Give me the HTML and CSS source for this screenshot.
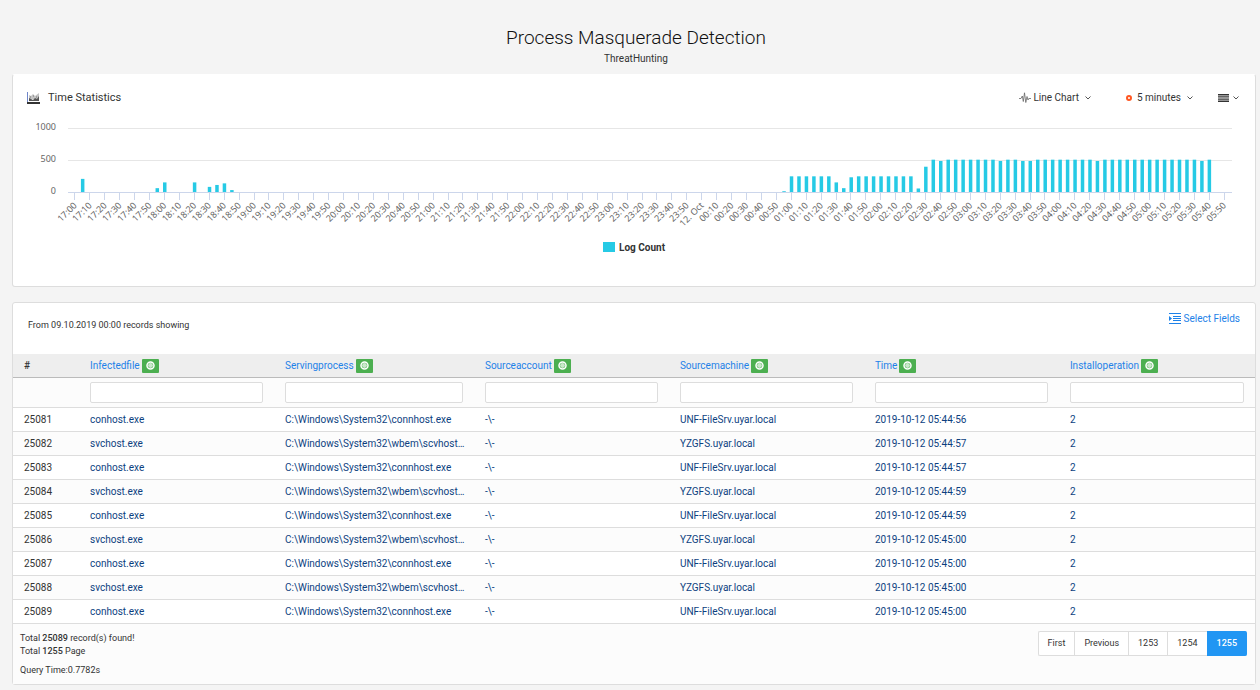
FILE: index.html
```html
<!DOCTYPE html>
<html lang="en">
<head>
<meta charset="utf-8">
<meta name="viewport" content="width=device-width, initial-scale=1">
<title>Process Masquerade Detection</title>
<link rel="stylesheet" href="styles.css">
</head>
<body>
<header class="page-head">
  <h1 class="page-title">Process Masquerade Detection</h1>
  <p class="page-sub">ThreatHunting</p>
</header>
<main class="page-main">
  <section class="card chart-card">
    <div class="chart-head">
      <h2 class="chart-title">
        <svg class="icon-chart" width="13" height="12" viewBox="0 0 13 12" aria-hidden="true">
          <path d="M2 7V3l2 1 2-2 2 2 4-3v6z" fill="#c4c4c4"/>
          <path d="M2 9V6l2 1 2 1 2-2 2 1 2-3v5z" fill="#555"/>
          <path d="M3 5h1M6 4h1M9 5h1" stroke="#777"/>
          <path d="M.5 0v11" stroke="#6f86c9"/>
          <path d="M0 11h13" stroke="#333" stroke-width="2"/>
        </svg>
        Time Statistics
      </h2>
      <div class="chart-tools">
        <button class="tool" type="button">
          <svg width="12" height="12" viewBox="0 0 12 12" fill="none" stroke="#666" stroke-width=".8" aria-hidden="true"><path d="M0 6.500h2L3.300 4l1 5.500L5.500 .8l1.300 9.700L8 4.500l1 3.500.8-1.500H12"/></svg>
          <span>Line Chart</span>
          <svg class="caret" width="6" height="4" viewBox="0 0 6 4" fill="none" stroke="#555" aria-hidden="true"><path d="M.5.5L3 3 5.500.5"/></svg>
        </button>
        <button class="tool tool-interval" type="button">
          <svg width="6" height="6" viewBox="0 0 6 6" fill="none" aria-hidden="true"><circle cx="3" cy="3" r="2" stroke="#ff5722" stroke-width="2"/></svg>
          <span>5 minutes</span>
          <svg class="caret" width="6" height="4" viewBox="0 0 6 4" fill="none" stroke="#555" aria-hidden="true"><path d="M.5.5L3 3 5.500.5"/></svg>
        </button>
        <button class="tool tool-menu" type="button" aria-label="Chart menu">
          <svg width="11" height="8" viewBox="0 0 11 8" aria-hidden="true"><path d="M0 .7h11M0 2.900h11M0 5.100h11M0 7.300h11" stroke="#333" stroke-width="1.400"/></svg>
          <svg class="caret" width="6" height="4" viewBox="0 0 6 4" fill="none" stroke="#555" aria-hidden="true"><path d="M.5.5L3 3 5.500.5"/></svg>
        </button>
      </div>
    </div>
    <svg class="chart" id="chart" role="img" aria-label="Log count over time"></svg>
    <div class="legend"><span class="legend-swatch"></span>Log Count</div>
  </section>

  <section class="card">
    <div class="list-head">
      <p class="list-note">From 09.10.2019 00:00 records showing</p>
      <a class="select-fields" href="#fields">
        <svg width="12" height="11" viewBox="0 0 12 11" aria-hidden="true"><path d="M0 .5h12M4 3.500h8M4 5.500h8M4 7.500h8M0 10.500h12" stroke="#1e82e8"/><path d="M0 3v5l3-2.500z" fill="#1e82e8"/></svg>
        Select Fields
      </a>
    </div>
    <table class="records">
      <colgroup><col class="col-num"><col class="col-std"><col class="col-wide"><col class="col-std"><col class="col-std"><col class="col-std"><col></colgroup>
      <thead><tr id="heads"><th scope="col">#</th></tr></thead>
      <tbody id="rows"><tr class="filters" id="filters"><td></td></tr></tbody>
    </table>
    <footer class="list-foot">
      <div class="totals">
        <p>Total <b>25089</b> record(s) found!</p>
        <p>Total <b>1255</b> Page</p>
        <p class="query-time">Query Time:0.7782s</p>
      </div>
      <nav class="pager" aria-label="Pages">
        <a href="#first">First</a><a href="#previous">Previous</a><a href="#1253">1253</a><a href="#1254">1254</a><a class="active" href="#1255" aria-current="page">1255</a>
      </nav>
    </footer>
  </section>
</main>
<script src="app.js"></script>
</body>
</html>
```
FILE: styles.css
```css
* { box-sizing: border-box; }
body {
  margin: 0;
  background: #f4f4f4;
  color: #333;
  font: 10px/13px Roboto, "Liberation Sans", sans-serif;
}
h1, h2, p { margin: 0; font-weight: 400; }
a { color: #1e82e8; text-decoration: none; }
.page-head { padding: 26px 0 9px 12px; text-align: center; }
.page-title { font-size: 19px; font-weight: 300; line-height: 24px; padding-bottom: 2px; color: #111; }
.page-main { display: flex; flex-direction: column; gap: 15px; padding: 0 4px 5px 12px; }
.card {
  background: #fff;
  border: 1px solid #ddd;
  border-radius: 3px;
}
.chart-card { border-top-color: #fff; padding-bottom: 30px; }
.chart-head {
  display: flex;
  justify-content: space-between;
  align-items: center;
  padding: 15px 16px 0 14px;
  height: 31px;
}
.chart-title { display: flex; align-items: center; gap: 8px; font-size: 11px; line-height: 16px; }
.chart-tools { display: flex; align-items: center; }
.tool {
  display: flex;
  align-items: center;
  gap: 2px;
  padding: 0;
  border: 0;
  background: none;
  color: #333;
  font: inherit;
  line-height: 16px;
}
.tool .caret { margin-left: 4px; }
.tool-interval { margin-left: 35px; gap: 5px; }
.tool-interval .caret { margin-left: 1px; }
.tool-menu { margin-left: 25px; }
.tool-menu .caret { margin-left: 2px; }
.chart { display: block; width: 100%; height: 132px; }
.grid { stroke: #e6e6e6; }
.axis, .tick { stroke: #ccd6eb; }
.bar { fill: #26cae5; }
.axis-text { fill: #666; font: 9px "Noto Sans", sans-serif; text-anchor: end; }
.legend {
  display: flex;
  align-items: center;
  justify-content: center;
  gap: 4px;
  height: 18px;
  font-weight: 700;
}
.legend-swatch { width: 12px; height: 10px; background: #26cae5; }

.list-head {
  display: flex;
  justify-content: space-between;
  padding: 8px 15px 0;
  height: 51px;
}
.list-note { padding-top: 8px; font-size: 9px; }
.select-fields { display: flex; align-items: center; gap: 3px; height: 15px; }
.records { width: 100%; table-layout: fixed; border-collapse: separate; border-spacing: 0; }
.col-num { width: 69px; }
.col-std { width: 15.7%; }
.col-wide { width: 16.1%; }
.records th, .records td {
  height: 24px;
  padding: 0 11px 0 8px;
  text-align: left;
  font-weight: 400;
  white-space: nowrap;
  overflow: hidden;
  text-overflow: ellipsis;
}
.records th:first-child, .records td:first-child { padding-left: 11px; }
.records th { background: #eee; border-bottom: 1px solid #bbb; }
.records th:first-child { font-weight: 500; }
.records td { color: #0d3f7f; border-bottom: 1px solid #ddd; }
.records td:first-child { color: #333; }
.records tr:nth-child(odd) td { background: #fcfcfc; }
.records tr:nth-child(even) td { background: #fff; }
.records .filters td { height: 30px; padding-right: 14px; }
.records .filters td:last-child { padding-right: 11px; }
.filter {
  display: block;
  width: 100%;
  height: 21px;
  padding: 0 4px;
  border: 1px solid #ddd;
  border-radius: 2px;
  background: #fff;
  font: inherit;
}
.head-cell { display: flex; align-items: center; gap: 2px; }
.head-button {
  display: flex;
  align-items: center;
  justify-content: center;
  width: 17px;
  height: 14px;
  padding: 0;
  border: 0;
  border-radius: 1px;
  background: #4caf50;
}
.list-foot {
  display: flex;
  justify-content: space-between;
  align-items: flex-start;
  padding: 7px 8px 7px 7px;
  background: #fcfcfc;
}
.totals { padding-top: 1px; font-size: 9px; }
.totals b { font-weight: 500; }
.query-time { padding-top: 6px; }
.pager { display: flex; }
.pager a {
  padding: 5px 9px;
  border: 1px solid #ddd;
  border-right: 0;
  background: #fff;
  color: #333;
  font-size: 9px;
}
.pager a:first-child { border-radius: 2px 0 0 2px; }
.pager .active {
  border-color: #2196f3;
  border-radius: 0 2px 2px 0;
  padding-right: 10px;
  background: #2196f3;
  color: #fff;
  font-weight: 500;
}
```
FILE: app.js
```js
const fields = ["Infectedfile", "Servingprocess", "Sourceaccount", "Sourcemachine", "Time", "Installoperation"];
const dot = '<svg width="9" height="9" viewBox="0 0 9 9" fill="none" aria-hidden="true"><circle cx="4.500" cy="4.500" r="3.500" stroke="#fff" stroke-width="1.500"/><circle cx="4.500" cy="4.500" r="2.400" fill="#c9e8ca"/></svg>';
document.getElementById("heads").insertAdjacentHTML("beforeend", fields.map(f =>
  `<th scope="col"><span class="head-cell"><a href="#${f}">${f}</a><button class="head-button" type="button" aria-label="${f} options">${dot}</button></span></th>`).join(""));
document.getElementById("filters").insertAdjacentHTML("beforeend", fields.map(f =>
  `<td><input class="filter" type="text" aria-label="Filter ${f}"></td>`).join(""));

const seconds = ["44:56", "44:57", "44:57", "44:59", "44:59", "45:00", "45:00", "45:00", "45:00"];
document.getElementById("rows").insertAdjacentHTML("beforeend", seconds.map((s, i) => {
  const cells = i % 2
    ? ["svchost.exe", "C:\\Windows\\System32\\wbem\\scvhost.exe", "-\\-", "YZGFS.uyar.local"]
    : ["conhost.exe", "C:\\Windows\\System32\\connhost.exe", "-\\-", "UNF-FileSrv.uyar.local"];
  return "<tr>" + [25081 + i, ...cells, "2019-10-12 05:" + s, 2].map(c => `<td>${c}</td>`).join("") + "</tr>";
}).join(""));

// Log counts per 5-minute slot, starting at 17:00
const counts = { 1: 205, 11: 60, 12: 150, 16: 150, 18: 80, 19: 110, 20: 135, 21: 30, 95: 12, 102: 150, 103: 60, 104: 230, 113: 55, 114: 395 };
for (let i = 96; i < 113; i++) counts[i] ??= 245;
for (let i = 115; i < 153; i++) counts[i] = [116, 124, 127, 128, 137, 151].includes(i) ? 485 : 505;

const chart = document.getElementById("chart");
function drawChart() {
  const left = 55, right = chart.clientWidth - 23, base = 86;
  const step = (right - left) / 156;
  const first = left + step - 1;
  let out = "";
  [1000, 500, 0].forEach(v => {
    const y = base - v * 0.064;
    out += `<path class="${v ? "grid" : "axis"}" d="M${left} ${y + 0.5}H${right}"/><text class="axis-text" x="43" y="${y + 2}">${v}</text>`;
  });
  for (const i in counts) {
    const h = counts[i] * 0.064;
    out += `<rect class="bar" x="${first + i * step - 1}" y="${base - h}" width="3.500" height="${h}"/>`;
  }
  for (let k = 0; k < 78; k++) {
    const x = first + k * step * 2;
    const m = 17 * 60 + k * 10;
    const label = m === 1440 ? "12. Oct" : String(Math.floor(m / 60) % 24).padStart(2, "0") + ":" + String(m % 60).padStart(2, "0");
    out += `<path class="tick" d="M${Math.round(x) + 0.5} ${base + 1}v7"/><text class="axis-text" transform="translate(${x + 3} ${base + 14}) rotate(-45)">${label}</text>`;
  }
  chart.innerHTML = out;
}
drawChart();
addEventListener("resize", drawChart);
```
